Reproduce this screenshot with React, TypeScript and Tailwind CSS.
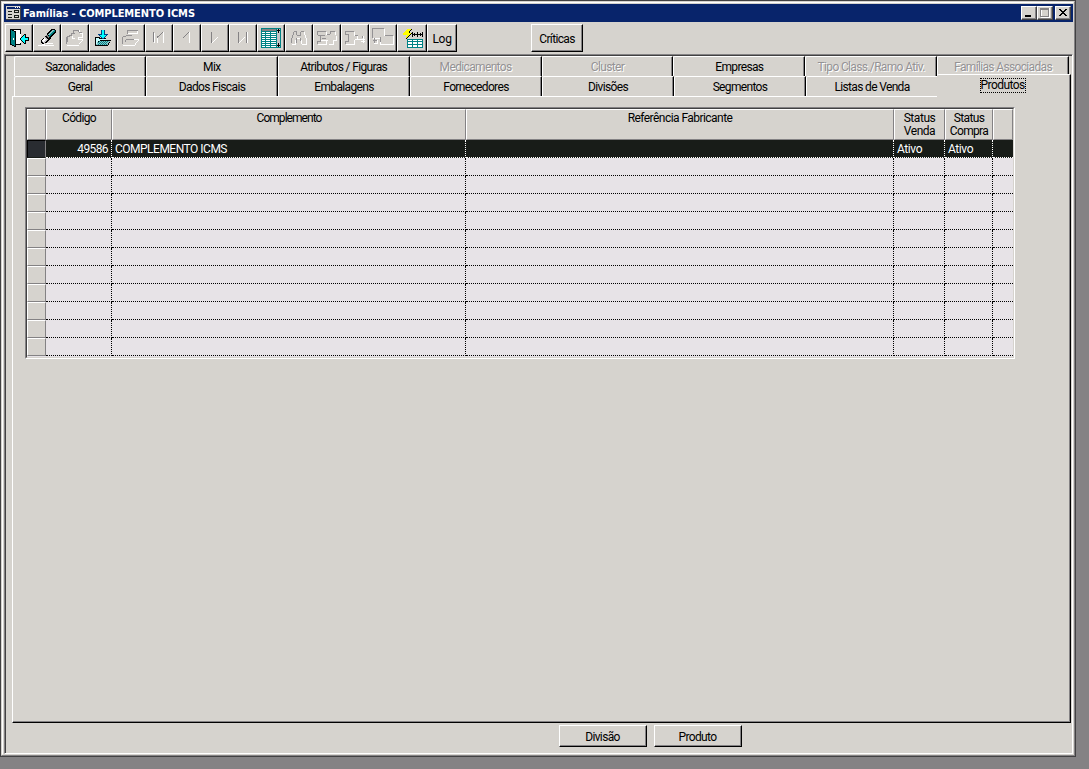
import type { ReactNode } from 'react'
import clsx from 'clsx'

interface Tab {
    label: string
    disabled?: boolean
}

interface Product {
    code: string
    name: string
    reference: string
    saleStatus: string
    buyStatus: string
}

const backTabs: Tab[] = [
    { label: 'Sazonalidades' },
    { label: 'Mix' },
    { label: 'Atributos / Figuras' },
    { label: 'Medicamentos', disabled: true },
    { label: 'Cluster', disabled: true },
    { label: 'Empresas' },
    { label: 'Tipo Class./Ramo Ativ.', disabled: true },
    { label: 'Famílias Associadas', disabled: true },
]

const frontTabs: Tab[] = [
    { label: 'Geral' },
    { label: 'Dados Fiscais' },
    { label: 'Embalagens' },
    { label: 'Fornecedores' },
    { label: 'Divisões' },
    { label: 'Segmentos' },
    { label: 'Listas de Venda' },
]

const products: Product[] = [
    { code: '49586', name: 'COMPLEMENTO ICMS', reference: '', saleStatus: 'Ativo', buyStatus: 'Ativo' },
]

const emptyRows = Array.from({ length: 11 }, (_, i) => i)

const Icon = ({ children }: { children: ReactNode }) => (
    <svg width="25" height="25" viewBox="1 1 25 25" shapeRendering="crispEdges" className="shrink-0">
        {children}
    </svg>
)

// disabled icons: grey upper edges, white lower edges
const Etched = ({ dark, light }: { dark: string, light: string }) => (
    <Icon>
        <path d={light} fill="none" stroke="#fff" />
        <path d={dark} fill="none" stroke="#949294" />
    </Icon>
)

const DoorIcon = () => (
    <Icon>
        <path d="M6 5h10v16h-5z" fill="#fff" />
        <path d="M5 5h11v1H5zM15 5h1v5h-1zM15 19h1v2h-1zM11 20h5v1h-5z" fill="#000" />
        <path d="M5 6h2v1h2v1h2v15h-2v-1H7v-1H5z" fill="#008284" />
        <path d="M5 5h1v16H5zM10 8h1v15h-1zM7 6h2v1H7zM9 7h2v1H9zM6 20h1v1H6zM7 21h2v1H7zM9 22h2v1H9z" fill="#000" />
        <path d="M8 14h1v2H8z" fill="#fff" />
        <path d="M15 14h1v-1h1v-1h1v-1h1v-1h2v3h3v4h-3v3h-2v-1h-1v-1h-1v-1h-1v-1h-1z" fill="#000" />
        <path d="M16 14h1v-1h1v-1h1v-1h1v3h3v2h-3v3h-1v-1h-1v-1h-1v-1h-1z" fill="#00ffff" />
    </Icon>
)

const EraserIcon = () => (
    <Icon>
        <path d="M5 21h4v-1h3v1h9v1H5zM13 19h7v1h-7z" fill="#fff" />
        <path d="M18 5h4v1h1v3h-1v1h-1v1h-1v1h-1v1h-1v2h-1v1h-1v1h-1v1h-1v1h-3v1H9v-1H8v-3h1v-1h1v-1h1v-1h1v-1h1v-1h1V9h1V8h1V7h1V6h1z" fill="#000" />
        <path d="M19 6h2v1h-1v1h-1v1h-1v1h-1v1h-2v-1h1V9h1V8h1V7h1z" fill="#84c3c6" />
        <path d="M21 6h1v2h-1v1h-1v1h-1v1h-1v1h-1v1h-1v-2h1v-1h1V9h1V8h1V7h1z" fill="#008284" />
        <path d="M13 11h2v1h1v2h-1v-1h-1v-1h-1z" fill="#848284" />
        <path d="M11 13h2v1h1v1h1v1h-1v1h-1v1h-1v1h-2v-1H9v-2h1v-1h1z" fill="#c6c3c6" />
        <path d="M11 14h1v1h1v1h-1v1h-1v1h-1v-1h-1v-1h1v-1h1z" fill="#fff" />
    </Icon>
)

const SaveIcon = () => (
    <Icon>
        <path d="M6 13h5v1h6v2h5v1h-1v2h-1v2h-1v1H6z" fill="#000" />
        <path d="M7 14h3v1h7v1h-6v1H9v2H8v2H7z" fill="#c6ffff" />
        <path d="M10 17h11v1h-1v1h-1v2H7v-1h1v-2h2z" fill="#84c3c6" />
        <path d="M10 17h1v1h-1zM12 17h1v1h-1zM14 17h1v1h-1zM16 17h1v1h-1zM18 17h1v1h-1zM9 18h1v1H9zM11 18h1v1h-1zM13 18h1v1h-1zM15 18h1v1h-1zM17 18h1v1h-1zM10 19h1v1h-1zM12 19h1v1h-1zM14 19h1v1h-1zM16 19h1v1h-1zM9 20h1v1H9zM11 20h1v1h-1zM13 20h1v1h-1zM15 20h1v1h-1zM17 20h1v1h-1z" fill="#008284" />
        <path d="M12 6h4v4h3v1h-1v1h-1v1h-1v1h-1v1h-2v-1h-1v-1h-1v-1h-1v-1H9v-1h3z" fill="#004284" />
        <path d="M13 6h2v5h2v1h-1v1h-1v1h-2v-1h-1v-1h-1v-1h2z" fill="#00ffff" />
    </Icon>
)

const GridIcon = () => (
    <Icon>
        <path d="M4 4h20v20H4z" fill="#008284" />
        <path d="M5 5h14v2H5z" fill="#848284" />
        <path d="M5 8h3v1H5zM9 8h4v1H9zM14 8h5v1h-5zM5 10h3v1H5zM9 10h4v1H9zM14 10h5v1h-5zM5 12h3v1H5zM9 12h4v1H9zM14 12h5v1h-5zM5 14h3v1H5zM9 14h4v1H9zM14 14h5v1h-5zM5 16h3v1H5zM9 16h4v1H9zM14 16h5v1h-5zM5 18h3v1H5zM9 18h4v1H9zM14 18h5v1h-5zM5 20h3v1H5zM9 20h4v1H9zM14 20h5v1h-5zM5 22h3v1H5zM9 22h4v1H9zM14 22h5v1h-5z" fill="#fff" />
        <path d="M20 5h3v18h-3z" fill="#c6c3c6" />
        <path d="M21 5h1v4h-1zM20 6h3v1h-3zM21 19h1v4h-1zM20 21h3v1h-3z" fill="#000" />
    </Icon>
)

const BoltGridIcon = () => (
    <Icon>
        <path d="M10 5h4v1h-1v1h-1v2h2v1h-1v1h-1v1h-1v1h-1v1H9v1H8v-3h1v-1H5V9h1V8h1V7h2V6h1z" fill="#000" />
        <path d="M9 5h4v1h-1v1h-1v2h2v1h-1v1h-1v1h-1v1H9v1H8v-2h1v-1H5V9h1V8h1V7h1V6h1z" fill="#ffff00" />
        <path d="M14 8h1v5h-1zM24 8h1v5h-1zM19 8h1v5h-1zM15 10h4v1h-4zM20 10h4v1h-4zM16 9h1v3h-1zM22 9h1v3h-1z" fill="#000" />
        <path d="M9 15h16v9H9z" fill="#008284" />
        <path d="M10 16h4v1h-4zM15 16h4v1h-4zM20 16h4v1h-4zM10 18h4v2h-4zM15 18h4v2h-4zM20 18h4v2h-4zM10 21h4v2h-4zM15 21h4v2h-4zM20 21h4v2h-4z" fill="#fff" />
    </Icon>
)

const ToolButton = ({ children, className = 'w-7' }: { children?: ReactNode, className?: string }) => (
    <button className={clsx('h-7 shrink-0 border border-t-white border-l-white border-r-black border-b-black', className)}>
        <span className="flex h-full w-full items-center justify-center border-r border-b border-[#848284]">
            {children}
        </span>
    </button>
)

const TabItem = ({ tab, last }: { tab: Tab, last?: boolean }) => (
    <div
        className={clsx(
            'flex h-5 w-[132px] rounded-tl-[2px] border-t border-r border-l border-t-white border-l-white',
            last ? 'border-r-white' : 'border-r-black'
        )}>
        <span
            className={clsx(
                'flex w-full items-center justify-center border-r pt-0.5 pl-px',
                last ? 'border-transparent' : 'border-[#848284]',
                tab.disabled && 'text-[#949294] [text-shadow:1px_1px_0_#fff]'
            )}>
            {tab.label}
        </span>
    </div>
)

const HeaderCell = ({ children, className }: { children?: ReactNode, className: string }) => (
    <div className={clsx('h-[31px] shrink-0 border-t border-l border-r border-b border-t-white border-l-white border-r-[#848284] border-b-[#848284] pt-0.5 text-center leading-[13px]', className)}>
        {children}
    </div>
)

const Cell = ({ children, selected, className }: { children?: ReactNode, selected?: boolean, className: string }) => (
    <div
        className={clsx(
            'h-[18px] shrink-0 border-b border-dotted pt-px leading-4',
            selected ? 'border-r-white border-b-white bg-[#181c18] text-white' : 'border-black bg-[#e7e3e7]',
            className
        )}>
        {children}
    </div>
)

const Row = ({ product }: { product?: Product }) => {
    const selected = !!product
    return (
        <div className="flex">
            <div
                className={clsx(
                    'h-[18px] w-[19px] shrink-0 border',
                    selected
                        ? 'border-t-black border-l-black border-r-[#848284] border-b-[#181c18] bg-[#292c31]'
                        : 'border-t-white border-l-white border-r-[#848284] border-b-[#848284] bg-[#d6d3ce]'
                )} />
            <Cell selected={selected} className="w-[66px] border-r pr-[3px] text-right tracking-[-0.6px]">{product?.code}</Cell>
            <Cell selected={selected} className="w-[354px] border-r pl-[3px] tracking-[-0.5px]">{product?.name}</Cell>
            <Cell selected={selected} className="w-[428px] border-r pl-[3px]">{product?.reference}</Cell>
            <Cell selected={selected} className="w-[51px] border-r pl-[3px] tracking-[-0.4px]">{product?.saleStatus}</Cell>
            <Cell selected={selected} className="w-[48px] border-r pl-[3px] tracking-[-0.4px]">{product?.buyStatus}</Cell>
            <Cell selected={selected} className="w-5" />
        </div>
    )
}

const TitleBar = () => (
    <div className="flex h-[18px] items-center bg-[#08246b] pr-[2px] pl-[2px]">
        <svg width="16" height="16" viewBox="0 0 16 16" shapeRendering="crispEdges">
            <path d="M0 1h15v14H0z" fill="#d6d3ce" />
            <path d="M1 2h13v2H1z" fill="#08246b" />
            <path d="M9 2h1v1H9zM11 2h1v1h-1zM13 2h1v1h-1z" fill="#fff" />
            <path d="M2 6h4v1H2zM2 9h4v1H2zM2 12h4v1H2zM8 5h5v1H8zM8 7h5v1H8zM8 5h1v3H8zM12 5h1v3h-1zM8 10h5v1H8zM8 12h5v1H8zM8 10h1v3H8zM12 10h1v3h-1z" fill="#181c18" />
            <path d="M0 14h15v1H0zM14 1h1v14h-1z" fill="#424142" />
        </svg>
        <span className="flex-1 pl-px font-['DejaVu_Sans_Condensed','DejaVu_Sans',sans-serif] text-[11px] font-bold tracking-[-0.08px] whitespace-nowrap text-white">
            Famílias - COMPLEMENTO ICMS
        </span>
        <div className="flex">
            {['min', 'max', 'close'].map(kind => (
                <button
                    key={kind}
                    className={clsx(
                        'h-[14px] w-4 border border-t-white border-l-white border-r-[#424142] border-b-[#424142] bg-[#d6d3ce]',
                        kind === 'close' && 'ml-0.5'
                    )}>
                    <svg width="14" height="12" viewBox="0 0 14 12" shapeRendering="crispEdges">
                        <path d="M13 0h1v12H0v-1h13z" fill="#848284" />
                        {kind === 'min' && <path d="M3 8h6v2H3z" fill="#000" />}
                        {kind === 'max' && (
                            <>
                                <path d="M3 1h9v10H3zM4 3v7h7V3z" fillRule="evenodd" fill="#fff" />
                                <path d="M2 1h9v9H2zM3 3v6h7V3z" fillRule="evenodd" fill="#848284" />
                            </>
                        )}
                        {kind === 'close' && (
                            <path d="M3 2h2v1h1v1h2V3h1V2h2v1h-1v1H9v1H8v1h1v1h1v1h1v1H9V8H8V7H6v1H5v1H3V8h1V7h1V6h1V5H5V4H4V3H3z" fill="#000" />
                        )}
                    </svg>
                </button>
            ))}
        </div>
    </div>
)

const Toolbar = () => (
    <div className="flex h-8 pt-0.5 pl-px">
        <ToolButton><DoorIcon /></ToolButton>
        <ToolButton><EraserIcon /></ToolButton>
        <ToolButton>
            <Etched
                dark="M6.5 18v-6h2M8 11.5h3M10.5 12v-3h3M12.5 9v-3h5M17.5 6v2M18 8.5h3M5.5 13v7"
                light="M18.5 6v3M19 9.5h3M21.5 9v4M18 13.5h4M17.5 13v3M6 21.5h12M18.5 20v-1M19.5 19v-1M20.5 18v-1M21.5 17v-2M17 15.5h5M11.5 12v2h2" />
        </ToolButton>
        <ToolButton><SaveIcon /></ToolButton>
        <ToolButton>
            <Etched
                dark="M10.5 10v-4h10M9 11.5h6M5.5 20v-7M6 12.5h3M9 15.5h8M8.5 16v2"
                light="M20.5 6v4M11 9.5h10M6 21.5h12M18.5 21v-2M19.5 19v-1M20.5 18v-1M21.5 17v-2M16 15.5h6" />
        </ToolButton>
        <ToolButton>
            <Icon>
                <path d="M9 9h1v10H9zM12 13h1v6h-1zM18 8h1v11h-1z" fill="#fff" />
                <path d="M8 8h1v10H8zM12 12h1v2h-1zM13 12h1v1h-1zM14 11h1v1h-1zM15 10h1v1h-1zM16 9h1v1h-1zM17 8h1v1h-1z" fill="#848284" />
            </Icon>
        </ToolButton>
        <ToolButton>
            <Icon>
                <path d="M16 8h1v11h-1z" fill="#fff" />
                <path d="M10 13h1v1h-1zM11 12h1v1h-1zM12 11h1v1h-1zM13 10h1v1h-1zM14 9h1v1h-1zM15 8h1v1h-1z" fill="#848284" />
            </Icon>
        </ToolButton>
        <ToolButton>
            <Icon>
                <path d="M11 18h1v1h-1zM12 17h1v1h-1zM13 16h1v1h-1zM14 15h1v1h-1zM15 14h1v1h-1zM16 13h1v1h-1z" fill="#fff" />
                <path d="M10 8h1v11h-1z" fill="#848284" />
            </Icon>
        </ToolButton>
        <ToolButton>
            <Icon>
                <path d="M10 18h1v1h-1zM11 17h1v1h-1zM12 16h1v1h-1zM13 15h1v1h-1zM14 14h1v1h-1zM15 13h1v1h-1zM18 8h1v11h-1z" fill="#fff" />
                <path d="M9 8h1v11H9zM17 8h1v11h-1z" fill="#848284" />
            </Icon>
        </ToolButton>
        <ToolButton><GridIcon /></ToolButton>
        <ToolButton>
            <Etched
                dark="M9 7.5h3M8.5 8v3M7.5 11v3M6.5 14v5M16 7.5h3M15.5 8v3M11.5 8v3M12 11.5h4M11.5 14v5M15.5 14v3"
                light="M19.5 8v3M20.5 11v3M21.5 14v6M7 20.5h4M10.5 16v4M16.5 16v4M17 20.5h5M12 14.5h4" />
        </ToolButton>
        <ToolButton>
            <Etched
                dark="M4 7.5h9M4.5 8v3M5 11.5h7M7.5 12v5M9 14.5h4M4 17.5h4M4.5 17v3M14 10.5h3M17.5 10v-3h4"
                light="M13.5 8v3M5 20.5h8M13.5 17v4M8 16.5h7M22.5 8v3M23.5 12v4M20 16.5h4M20.5 17v4M16 20.5h4" />
        </ToolButton>
        <ToolButton>
            <Etched
                dark="M4 7.5h9M4.5 8v3M5 10.5h3M7.5 11v6M4 17.5h4M4.5 18v2M14 11.5h3M21.5 12v2"
                light="M13.5 8v4M16.5 12v4M5 20.5h9M13.5 16v5M14 15.5h10M22.5 12v7M20 17.5h4" />
        </ToolButton>
        <ToolButton>
            <Etched
                dark="M3 4.5h12M3.5 5v9M16 11.5h8M4 16.5h4M5.5 14v5M11.5 13v5"
                light="M15.5 5v7M24.5 12v9M12 20.5h13M4 14.5h8M8.5 16v4M5 19.5h4M11.5 18v3" />
        </ToolButton>
        <ToolButton className="w-[30px]"><BoltGridIcon /></ToolButton>
        <ToolButton className="w-[30px]"><span className="pt-[3px] pl-px tracking-[-0.3px]">Log</span></ToolButton>
        <ToolButton className="ml-[74px] w-[52px]"><span className="pt-[3px] pl-px">Críticas</span></ToolButton>
    </div>
)

export default function App() {
    return (
        <div className="h-[769px] w-[1089px] overflow-hidden bg-[#848284] font-[Roboto,sans-serif] text-[12px] leading-[13px] tracking-[-0.65px] text-black">
            <div className="h-[757px] w-[1076px] border border-[#424142] bg-[#d6d3ce]">
                <div className="h-full border border-t-[#d6d3ce] border-l-[#d6d3ce] border-r-[#848284] border-b-[#848284]">
                    <div className="h-full border border-t-white border-l-white border-r-[#d6d3ce] border-b-[#d6d3ce] pt-px pl-px">
                        <TitleBar />
                        <Toolbar />
                        <div className="h-[700px] border border-t-[#848284] border-l-[#848284] border-r-white border-b-white">
                            <div className="h-full border-t border-l border-[#424142] pl-1.5">
                                {/* tabs */}
                                <div className="relative ml-0.5">
                                    <div className="flex w-[1055px]">
                                        {backTabs.map(tab => <TabItem key={tab.label} tab={tab} />)}
                                    </div>
                                    <div className="flex">
                                        {frontTabs.map((tab, i) => <TabItem key={tab.label} tab={tab} last={i === 6} />)}
                                    </div>
                                    <div className="absolute top-[18px] left-[923px] z-10 flex h-[23px] w-[134px] justify-center rounded-tl-[2px] border-t border-r border-t-white border-r-black bg-[#d6d3ce]">
                                        <span className="flex h-full w-full justify-center border-r border-[#848284] pt-[3px]">
                                            <span className="mr-px h-[15px] w-[46px] border border-dotted border-black text-center tracking-[-0.55px]">Produtos</span>
                                        </span>
                                    </div>
                                </div>
                                {/* page */}
                                <div className="h-[627px] w-[1059px] border border-t-white border-l-white border-r-black border-b-black">
                                    <div className="h-full border-r border-b border-[#848284] pt-2.5 pl-3">
                                        <div className="h-[252px] w-[990px] border border-t-[#848284] border-l-[#848284] border-r-white border-b-white">
                                            <div className="h-full border border-t-[#424142] border-l-[#424142] border-r-[#d6d3ce] border-b-[#d6d3ce] bg-[#e7e3e7]">
                                                <div className="flex bg-[#d6d3ce]">
                                                    <HeaderCell className="w-[19px]" />
                                                    <HeaderCell className="w-[66px]">Código</HeaderCell>
                                                    <HeaderCell className="w-[354px] tracking-[-0.95px]">Complemento</HeaderCell>
                                                    <HeaderCell className="w-[428px] tracking-[-0.55px]">Referência Fabricante</HeaderCell>
                                                    <HeaderCell className="w-[51px] tracking-[-0.45px]">Status<br />Venda</HeaderCell>
                                                    <HeaderCell className="w-[48px]">Status<br />Compra</HeaderCell>
                                                    <HeaderCell className="w-5" />
                                                </div>
                                                {products.map(product => <Row key={product.code} product={product} />)}
                                                {emptyRows.map(i => <Row key={i} />)}
                                            </div>
                                        </div>
                                    </div>
                                </div>
                                {/* footer */}
                                <div className="flex gap-[7px] pt-0.5 pl-[547px]">
                                    <ToolButton className="h-[22px]! w-[88px]"><span className="pt-[3px]">Divisão</span></ToolButton>
                                    <ToolButton className="h-[22px]! w-[88px]"><span className="pt-[3px]">Produto</span></ToolButton>
                                </div>
                            </div>
                        </div>
                    </div>
                </div>
            </div>
        </div>
    )
}
